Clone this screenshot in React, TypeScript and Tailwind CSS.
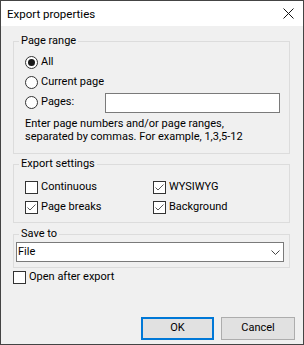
import React from "react";

function Radio({ checked }: { checked?: boolean }) {
  return (
    <span className="w-[13px] h-[13px] rounded-full border border-[#333] bg-white flex items-center justify-center shrink-0">
      {checked && <span className="w-[7px] h-[7px] rounded-full bg-[#1a1a1a]" />}
    </span>
  );
}

function Check({ checked }: { checked?: boolean }) {
  return (
    <span className="w-[13px] h-[13px] border border-[#333] bg-white flex items-center justify-center shrink-0">
      {checked && (
        <svg width="11" height="11" viewBox="0 0 11 11">
          <path d="M1.5 5.5 L4 8 L9.5 2.5" fill="none" stroke="#5a5a5a" strokeWidth="1" />
        </svg>
      )}
    </span>
  );
}

export default function App() {
  return (
    <div className="w-[304px] h-[345px] border border-[#444] bg-[#f0f0f0] flex flex-col font-['Roboto',Arial,sans-serif] text-[11px] text-black">
      {/* Title bar */}
      <div className="h-[25px] bg-white flex items-center justify-between pl-[6px] pr-[9px] shrink-0">
        <span className="text-[11.5px] leading-[14px]">Export properties</span>
        <svg width="11" height="11" viewBox="0 0 11 11">
          <path d="M0.5 0.5 L10.5 10.5 M10.5 0.5 L0.5 10.5" stroke="#111" strokeWidth="1" />
        </svg>
      </div>

      <div className="flex-1 flex flex-col pl-[12px]">
        {/* Page range */}
        <fieldset className="mt-[8px] w-[277px] border border-[#dcdcdc] pl-[11px] pb-[10px]">
          <legend className="ml-[-6px] px-[2px] leading-[14px]">Page range</legend>
          <div className="pt-[4px]">
            <div className="h-[20px] flex items-center gap-[3px]">
              <Radio checked />
              <span>All</span>
            </div>
            <div className="h-[20px] flex items-center gap-[3px]">
              <Radio />
              <span>Current page</span>
            </div>
            <div className="h-[20px] flex items-start">
              <div className="w-[80px] h-[20px] flex items-center gap-[3px]">
                <Radio />
                <span>Pages:</span>
              </div>
              <div className="w-[175px] h-[20px] bg-white border border-[#7a7a7a] mt-[1px]" />
            </div>
            <p className="mt-[5px] leading-[13px]">
              Enter page numbers and/or page ranges,
              <br />
              separated by commas. For example, 1,3,5-12
            </p>
          </div>
        </fieldset>

        {/* Export settings */}
        <fieldset className="mt-[3px] w-[277px] border border-[#dcdcdc] pl-[11px] pb-[5px]">
          <legend className="ml-[-6px] px-[2px] leading-[14px]">Export settings</legend>
          <div className="pt-[6px] grid grid-cols-[128px_1fr]">
            <div className="h-[20px] flex items-center gap-[3px]">
              <Check />
              <span>Continuous</span>
            </div>
            <div className="h-[20px] flex items-center gap-[3px]">
              <Check checked />
              <span>WYSIWYG</span>
            </div>
            <div className="h-[20px] flex items-center gap-[3px]">
              <Check checked />
              <span>Page breaks</span>
            </div>
            <div className="h-[20px] flex items-center gap-[3px]">
              <Check checked />
              <span>Background</span>
            </div>
          </div>
        </fieldset>

        {/* Save to */}
        <fieldset className="mt-[4px] w-[277px] border border-[#dcdcdc] pl-[2px] pb-[5px]">
          <legend className="ml-[3px] px-[2px] leading-[14px]">Save to</legend>
          <div className="mt-[1px] w-[268px] h-[20px] bg-white border border-[#7a7a7a] flex items-center justify-between pl-[1px] pr-[3px]">
            <span>File</span>
            <svg width="9" height="5" viewBox="0 0 9 5">
              <path d="M0.5 0.5 L4.5 4.5 L8.5 0.5" fill="none" stroke="#444" strokeWidth="1" />
            </svg>
          </div>
        </fieldset>

        <div className="h-[18px] flex items-center gap-[3px]">
          <Check />
          <span>Open after export</span>
        </div>

        {/* Buttons */}
        <div className="mt-auto flex justify-end gap-[7px] pr-[8px] pb-[4px]">
          <button className="w-[73px] h-[23px] bg-[#e1e1e1] border-2 border-[#0078d7] flex items-center justify-center">
            OK
          </button>
          <button className="w-[74px] h-[23px] bg-[#e1e1e1] border border-[#adadad] flex items-center justify-center">
            Cancel
          </button>
        </div>
      </div>
    </div>
  );
}
